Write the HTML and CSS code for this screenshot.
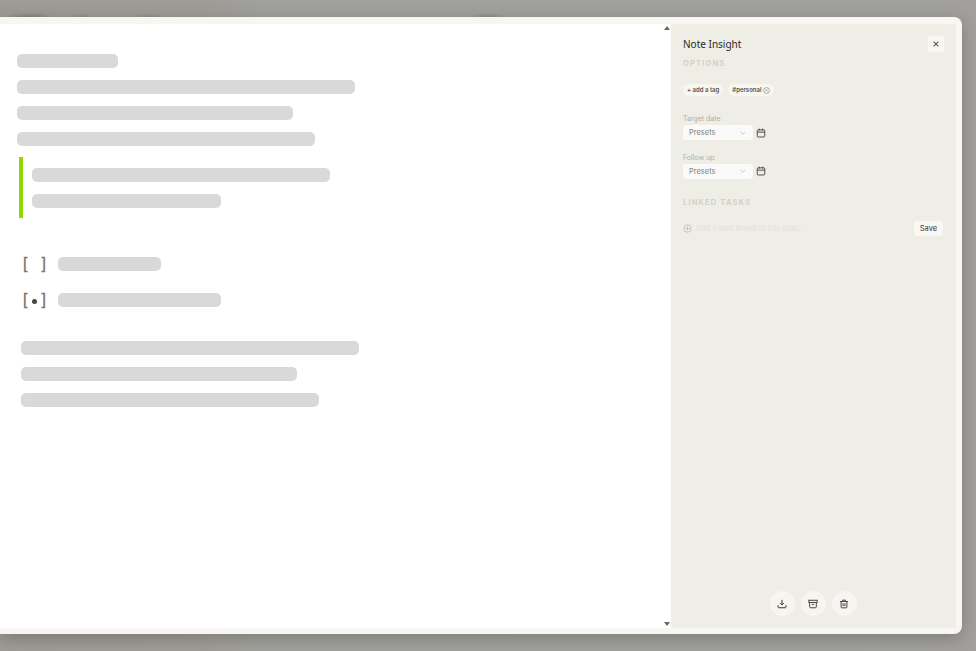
FILE: index.html
```html
<!DOCTYPE html>
<html lang="en">
<head>
<meta charset="utf-8">
<title>Note Insight</title>
<link rel="stylesheet" href="styles.css">
</head>
<body>
<div class="modal">
  <main class="note">
    <div class="group">
      <div class="bar w101"></div>
      <div class="bar w338"></div>
      <div class="bar w276"></div>
      <div class="bar w298"></div>
    </div>
    <blockquote class="quote">
      <div class="bar w298"></div>
      <div class="bar w189"></div>
    </blockquote>
    <div class="tasks">
      <div class="task"><span class="box"><span>[</span><span>]</span></span><div class="bar w103"></div></div>
      <div class="task"><span class="box"><span>[</span><i class="dot"></i><span>]</span></span><div class="bar w163"></div></div>
    </div>
    <div class="group tail">
      <div class="bar w338"></div>
      <div class="bar w276"></div>
      <div class="bar w298"></div>
    </div>
  </main>
  <div class="scroll"><i class="arrow up"></i><i class="arrow down"></i></div>
  <aside class="panel">
    <header class="head">
      <h2>Note Insight</h2>
      <button class="close" aria-label="Close">
        <svg viewBox="0 0 10 10" width="8" height="8"><path d="M2 2l6 6M8 2l-6 6" stroke="#55544e" stroke-width="1.3" fill="none"/></svg>
      </button>
    </header>
    <h3 class="section">OPTIONS</h3>
    <div class="tags">
      <span class="tag">+ add a tag</span>
      <span class="tag">#personal
        <svg viewBox="0 0 10 10" width="7" height="7"><circle cx="5" cy="5" r="4.2" fill="none" stroke="#77756e" stroke-width=".8"/><path d="M3.5 3.5l3 3M6.5 3.5l-3 3" stroke="#77756e" stroke-width=".8"/></svg>
      </span>
    </div>
    <div class="field first">
      <label>Target date</label>
      <div class="row">
        <div class="select">Presets<svg viewBox="0 0 10 6" width="6" height="4"><path d="M1 1l4 4 4-4" fill="none" stroke="#a9a8a2" stroke-width="1"/></svg></div>
        <svg class="cal" viewBox="0 0 12 12" width="10" height="10"><rect x="1.5" y="2.2" width="9" height="8.6" rx="1.2" fill="none" stroke="#45443f" stroke-width="1.1"/><path d="M1.5 5h9M4 .8v2.4M8 .8v2.4" stroke="#45443f" stroke-width="1.1"/></svg>
      </div>
    </div>
    <div class="field">
      <label>Follow up</label>
      <div class="row">
        <div class="select">Presets<svg viewBox="0 0 10 6" width="6" height="4"><path d="M1 1l4 4 4-4" fill="none" stroke="#a9a8a2" stroke-width="1"/></svg></div>
        <svg class="cal" viewBox="0 0 12 12" width="10" height="10"><rect x="1.5" y="2.2" width="9" height="8.6" rx="1.2" fill="none" stroke="#45443f" stroke-width="1.1"/><path d="M1.5 5h9M4 .8v2.4M8 .8v2.4" stroke="#45443f" stroke-width="1.1"/></svg>
      </div>
    </div>
    <h3 class="section linked">LINKED TASKS</h3>
    <div class="add-task">
      <svg viewBox="0 0 12 12" width="9" height="9"><circle cx="6" cy="6" r="5" fill="none" stroke="#b9b8b0" stroke-width="1"/><path d="M6 3.2v5.6M3.2 6h5.6" stroke="#b9b8b0" stroke-width="1"/></svg>
      <span class="placeholder">Add a task linked to this note...</span>
      <button class="save">Save</button>
    </div>
    <footer class="actions">
      <button class="round" aria-label="Download">
        <svg viewBox="0 0 12 12" width="10" height="10"><path d="M6 1v6M3.8 5L6 7.2 8.2 5" fill="none" stroke="#3a3935" stroke-width="1.2"/><path d="M1.2 7.5v2.2c0 .5.4.8.8.8h8c.4 0 .8-.3.8-.8V7.5" fill="none" stroke="#3a3935" stroke-width="1.2"/></svg>
      </button>
      <button class="round" aria-label="Archive">
        <svg viewBox="0 0 12 12" width="10" height="10"><rect x="1" y="1.5" width="10" height="2.6" fill="none" stroke="#3a3935" stroke-width="1.1"/><path d="M2 4.2v5.3c0 .6.4 1 1 1h6c.6 0 1-.4 1-1V4.2M4.6 6.4h2.8" fill="none" stroke="#3a3935" stroke-width="1.1"/></svg>
      </button>
      <button class="round" aria-label="Delete">
        <svg viewBox="0 0 12 12" width="10" height="10"><path d="M1.3 3h9.4M4.3 3V1.4h3.4V3M2.5 3v6.8c0 .5.4.8.8.8h5.4c.4 0 .8-.3.8-.8V3M4.9 5v3.6M7.1 5v3.6" fill="none" stroke="#3a3935" stroke-width="1.1"/></svg>
      </button>
    </footer>
  </aside>
</div>
</body>
</html>
```
FILE: styles.css
```css
* { box-sizing: border-box; }
html, body { height: 100%; }
body {
  margin: 0;
  overflow: hidden;
  background:
    radial-gradient(ellipse 26px 5px at 30px 17px, rgba(90, 85, 80, .35), transparent),
    radial-gradient(ellipse 14px 4px at 82px 17px, rgba(110, 110, 85, .25), transparent),
    radial-gradient(ellipse 20px 4px at 150px 17px, rgba(115, 105, 125, .25), transparent),
    radial-gradient(ellipse 18px 4px at 488px 17px, rgba(90, 85, 80, .3), transparent),
    linear-gradient(90deg, #9e9a95 0, #9f9b96 190px, #a0a09c 260px, #a1a09d 100%);
  font-family: Inter, "Liberation Sans", sans-serif;
  padding-top: 17px;
}
.modal {
  display: flex;
  width: 962px;
  height: 617px;
  padding: 7px 6px 6px 0;
  background: #f7f6f3;
  border-radius: 0 8px 8px 0;
  box-shadow: 0 4px 16px rgba(60, 60, 55, .35);
}
.note {
  width: 663px;
  background: #fff;
  padding: 30px 0 0 17px;
}
.bar {
  height: 14px;
  border-radius: 5px;
  background: #d9d9d9;
}
.w101 { width: 101px; }
.w103 { width: 103px; }
.w163 { width: 163px; }
.w189 { width: 189px; }
.w276 { width: 276px; }
.w298 { width: 298px; }
.w338 { width: 338px; }
.group { display: flex; flex-direction: column; gap: 12px; }
.quote {
  margin: 11px 0 0 2px;
  height: 61px;
  padding: 11px 0 0 9px;
  border-left: 4px solid #8fd900;
  display: flex;
  flex-direction: column;
  gap: 12px;
}
.tasks { display: flex; flex-direction: column; gap: 22px; margin: 39px 0 0 6px; }
.task { display: flex; align-items: center; gap: 12px; }
.box {
  width: 23px;
  display: flex;
  align-items: center;
  justify-content: space-between;
  font: 16px/14px "Liberation Sans", sans-serif;
  color: #7b736a;
  -webkit-text-stroke: .3px #7b736a;
}
.box span { width: 6px; }
.box span:last-child { text-align: right; }
.dot { width: 5px; height: 5px; border-radius: 50%; background: #4a4642; margin-top: 2px; }
.tail { margin: 34px 0 0 4px; }
.scroll {
  width: 8px;
  background: #fff;
  display: flex;
  flex-direction: column;
  justify-content: space-between;
  align-items: center;
  padding: 2px 0;
}
.arrow { width: 0; height: 0; border-left: 3px solid transparent; border-right: 3px solid transparent; }
.arrow.up { border-bottom: 4px solid #66665f; }
.arrow.down { border-top: 4px solid #66665f; }
.panel {
  width: 285px;
  background: #eeede6;
  padding: 12px;
  display: flex;
  flex-direction: column;
}
.head { display: flex; justify-content: space-between; align-items: center; height: 16px; }
.head h2 { margin: 0; font: 400 10px/16px "Noto Sans", sans-serif; color: #2b2a26; }
.close {
  width: 16px;
  height: 16px;
  padding: 0;
  border: 0;
  background: #f7f6f3;
  border-radius: 2px;
  display: flex;
  align-items: center;
  justify-content: center;
}
.section {
  margin: 7px 0 0;
  font-size: 7.5px;
  line-height: 10px;
  font-weight: 600;
  letter-spacing: 1.2px;
  color: #d0cfc4;
}
.tags { display: flex; gap: 5px; margin-top: 15px; }
.tag {
  height: 12px;
  padding: 0 4px;
  border-radius: 6px;
  background: #f7f6f1;
  font-size: 6px;
  font-weight: 600;
  line-height: 12px;
  color: #55534d;
  display: flex;
  align-items: center;
  gap: 2px;
}
.field { margin-top: 12.5px; }
.field.first { margin-top: 18px; }
.field label { display: block; font-size: 7px; line-height: 9px; color: #b3b1a6; margin-bottom: 2px; }
.row { display: flex; align-items: center; gap: 3px; }
.select {
  width: 70px;
  height: 15px;
  padding: 0 7px 0 6px;
  border-radius: 3px;
  background: #fafaf8;
  font-size: 7.5px;
  color: #85847c;
  display: flex;
  align-items: center;
  justify-content: space-between;
}
.linked { margin-top: 19.5px; }
.add-task { display: flex; align-items: center; gap: 4px; margin-top: 13px; height: 15px; }
.placeholder { font-size: 7.5px; color: #e2e1d9; flex: 1; }
.save {
  width: 29px;
  height: 15px;
  padding: 0;
  margin-right: 1px;
  border: 0;
  border-radius: 4px;
  background: #f8f8f5;
  font: 400 7.5px Inter, sans-serif;
  color: #33322e;
}
.actions { display: flex; justify-content: center; gap: 6px; margin-top: auto; padding-right: 1px; }
.round {
  width: 25px;
  height: 25px;
  padding: 0;
  border: 0;
  border-radius: 50%;
  background: #f6f5f1;
  display: flex;
  align-items: center;
  justify-content: center;
}
```
